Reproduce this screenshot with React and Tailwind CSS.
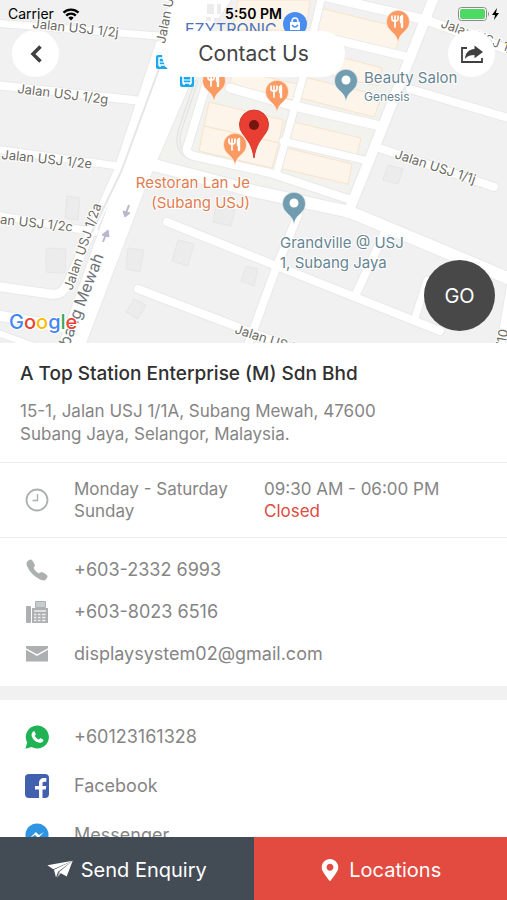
import { FaMapMarkerAlt } from "react-icons/fa";
import { IoCall } from "react-icons/io5";

const roads = [
  // left side streets
  { d: "M-5 23 L158 36", w: 7 },
  { d: "M-5 85 L142 101", w: 8 },
  { d: "M-5 149 L118 166", w: 7 },
  { d: "M-5 215 L95 232", w: 7 },
  { d: "M-5 286 L50 294 Q62 296 67 285 L118 172 L160 45", w: 9 },
  { d: "M-5 315 L80 330", w: 10 },
  { d: "M-5 332 L45 350", w: 6 },
  // commercial blocks
  { d: "M310 -7 L426 20 L515 52", w: 9 },
  { d: "M336 40 L404 56", w: 8 },
  { d: "M230 88 L290 105 L380 126", w: 9 },
  { d: "M410 89 L515 120", w: 8 },
  { d: "M283 141 L368 161", w: 7 },
  { d: "M376 147 L494 187", w: 8 },
  { d: "M207 82 L187 148 Q186 154 194 156 L270 173 L348 199", w: 8 },
  { d: "M322 -5 L303 77 L276 175", w: 7 },
  { d: "M436 -8 L383 126 L348 213", w: 10 },
  { d: "M150 164 L253 191 L350 212 L515 281", w: 12 },
  // south of the main street
  { d: "M167 222 L254 257 L440 331", w: 8 },
  { d: "M138 289 L240 328 L310 355", w: 8 },
  { d: "M298 215 L276 268 L248 345", w: 8 },
  { d: "M385 232 L356 294", w: 8 },
  { d: "M427 280 L415 318", w: 7 },
  { d: "M512 280 L500 350", w: 8 },
];

const shops = [
  "320,8 402,28 396,50 312,30",
  "238,0 310,0 306,30 232,30",
  "325,53 382,68 378,86 308,70",
  "304,77 382,96 374,117 300,98",
  "234,70 302,85 297,101 229,85",
  "286,120 361,138 357,155 282,138",
  "283,147 352,164 348,184 279,168",
  "209,102 283,120 279,143 204,126",
  "204,126 279,143 272,168 199,151",
];

const houses = [
  "67,196 80,198 78,220 65,218",
  "46,248 66,249 65,273 46,272",
  "128,248 144,250 140,272 126,269",
  "178,240 194,244 188,266 172,261",
  "134,299 146,305 138,319 126,312",
  "216,206 235,210 231,226 213,222",
  "246,266 258,269 254,286 241,281",
  "388,165 403,169 398,184 383,180",
];

const googleLetters = [
  ["G", "#4285f4"],
  ["o", "#ea4335"],
  ["o", "#fbbc05"],
  ["g", "#4285f4"],
  ["l", "#34a853"],
  ["e", "#ea4335"],
];

const numbers = [
  { icon: <IoCall className="size-6" />, label: "+603-2332 6993", href: "tel:+60323326993" },
  { icon: <FaxIcon />, label: "+603-8023 6516", href: "tel:+60380236516" },
  { icon: <MailIcon />, label: "displaysystem02@gmail.com", href: "mailto:displaysystem02@gmail.com" },
];

const socials = [
  { icon: <WhatsAppIcon />, label: "+60123161328" },
  { icon: <FacebookIcon />, label: "Facebook" },
  { icon: <MessengerIcon />, label: "Messenger" },
];

function FaxIcon() {
  return (
    <svg viewBox="0 0 24 24" className="size-6" fill="currentColor">
      <rect x="1" y="6" width="5" height="17" rx="1" />
      <path d="M10.500 1.500h10v6h-10z" fillOpacity=".65" stroke="currentColor" />
      <path d="M7 8h16v15H7z" />
      <path
        d="M9 11h12M9 14.500h2.500M13 14.500h2.500M17 14.500h3.500M9 17.500h2.500M13 17.500h2.500M17 17.500h3.500M9 20.500h2.500M13 20.500h2.500M17 20.500h3.500"
        stroke="#fff"
        strokeOpacity=".8"
        strokeWidth="1.300"
      />
    </svg>
  );
}

function MailIcon() {
  return (
    <svg viewBox="0 0 24 24" className="size-6" fill="currentColor">
      <path d="M1 4h22v2.200L12 12.300 1 6.200z" />
      <path d="M1 7.800l11 6.100 11-6.100v11.700H1z" />
    </svg>
  );
}

function ClockIcon() {
  return (
    <svg viewBox="0 0 24 24" className="size-6" fill="none" stroke="currentColor" strokeWidth="1.800">
      <circle cx="12" cy="12" r="10.500" />
      <path d="M12.500 6v6.500H7.500" strokeWidth="1.400" />
    </svg>
  );
}

function WhatsAppIcon() {
  return (
    <svg viewBox="0 0 24 24" className="size-6">
      <path d="M12.300.5a11.500 11.500 0 1 1-5.600 21.500L.4 23.700l1.800-6.100A11.500 11.500 0 0 1 12.300.5z" fill="#1fb355" />
      <path
        d="M8.300 6.500c.7-.4 1.200-.3 1.500.3l.9 2.100c.2.500-.1.900-1 1.900 1 1.900 2.300 3 4.200 3.800.9-1.200 1.300-1.600 1.900-1.300l2.200 1.100c.6.300.5.800.3 1.400-.5 1.400-2.300 2.200-4 1.900-4.200-.7-7.200-4.100-7.700-7.200-.2-1.600.5-3.200 1.700-4z"
        fill="#fff"
      />
    </svg>
  );
}

function FacebookIcon() {
  return (
    <svg viewBox="0 0 24 24" className="size-6">
      <rect width="24" height="24" rx="4" fill="#4160ae" />
      <path d="M14 24v-8.500h-4V12h4V9.200C14 6 16 4 19 4h2.300v3.700h-2c-1.300 0-1.800.7-1.800 1.900V12h3.800l-.6 3.500h-3.200V24z" fill="#fff" />
    </svg>
  );
}

function MessengerIcon() {
  return (
    <svg viewBox="0 0 24 24" className="size-6">
      <circle cx="12" cy="12" r="11.500" fill="#2f95e3" />
      <path d="M5 15l5.800-6 3.200 2.900L19 9l-5.800 6-3.100-2.900z" fill="#fff" />
    </svg>
  );
}

function ShareIcon() {
  return (
    <svg viewBox="0 0 24 20" className="w-6" fill="#3f3f3f">
      <path d="M7 4H2v14h20v-4" fill="none" stroke="#3f3f3f" strokeWidth="1.800" />
      <path d="M14.500 1.500L23 8l-8.500 6.300V11c-4 0-7 .8-9.500 3.700.3-5.600 3.500-9.300 9.500-9.800z" />
    </svg>
  );
}

function SendIcon() {
  return (
    <svg viewBox="0 0 26 20" className="w-[26px]" fill="#fff">
      <path d="M25.700.8L.3 5.300 6.300 9.200z" />
      <path d="M25.700.8L7 9.800l2 7.700 2-5.700z" />
      <path d="M25.700.8L11.800 12 10 17.700l3.300-3.500z" fillOpacity=".6" />
      <path d="M25.700.8L12.300 12.300l7.400 4.200z" />
    </svg>
  );
}

function Pin({ x, y, color, food }) {
  return (
    <g transform={`translate(${x} ${y})`}>
      <path
        d="M0 17C-1 10-3.500 8.500-7.500 4.500A11.500 11.500 0 1 1 7.500 4.500C3.500 8.500 1 10 0 17z"
        transform="translate(0 2)"
        fill={color}
        stroke="#fff"
        strokeOpacity=".5"
      />
      {food ? (
        <g fill="none" stroke="#fff" strokeLinecap="round">
          <path d="M-6-8v3q0 2 3 2t3-2v-3M-3-8V3" strokeWidth="1.700" />
          <path d="M4-8V3M3-7v5" strokeWidth="2.400" />
        </g>
      ) : (
        <circle cy="-3" r="4.500" fill="#fff" />
      )}
    </g>
  );
}

function BusStop({ x, y }) {
  return (
    <g transform={`translate(${x} ${y})`}>
      <rect width="14" height="14" rx="2" fill="#1ba7ee" />
      <path d="M3 3h8v7H3zM4 10v2M10 10v2" fill="none" stroke="#fff" strokeWidth="1.500" />
      <path d="M3 7h8" stroke="#fff" />
    </g>
  );
}

function MapView() {
  return (
    <svg
      viewBox="0 0 507 343"
      preserveAspectRatio="xMidYMid slice"
      className="block h-full w-full bg-[#f1f1f1]"
      fontFamily="Inter, sans-serif"
    >
      <path d="M187 92L207 80 300 100 430 25 383 126 350 205 150 158z" fill="#f2f2ee" />
      <g fill="#ececec" stroke="#e6e6e6">
        {houses.map((points) => (
          <polygon key={points} points={points} />
        ))}
      </g>
      <g fill="#fdf4ea" stroke="#f9e4cc">
        {shops.map((points) => (
          <polygon key={points} points={points} />
        ))}
      </g>
      <g fill="none" strokeLinecap="round" strokeLinejoin="round">
        <path d="M196 82L180 130Q174 150 190 158" stroke="#e1e2e0" strokeWidth="4" />
        <path d="M196 82L180 130Q174 150 190 158" stroke="#f1f1ee" strokeWidth="2" />
        {roads.map((road) => (
          <path key={road.d} d={road.d} stroke="#e9e9e9" strokeWidth={road.w + 2} />
        ))}
        <path d="M170-5L160 42 122 165 56 350H84L145 190 188 90 204 40 235-5z" fill="#fff" stroke="#e9e9e9" />
        {roads.map((road) => (
          <path key={road.d} d={road.d} stroke="#fff" strokeWidth={road.w} />
        ))}
        <path d="M163 58L121 172 92 232" stroke="#e6e6e6" strokeWidth="2" />
      </g>
      <g fill="#ececec">
        <path d="M207 4h7v10h-7zM217 4h4v10h-4zM206 17h5v4h-5zM214 18h7v4h-7z" />
      </g>

      <g fill="#b9b6cd" stroke="#b9b6cd" strokeWidth="2">
        <path d="M129 205L126 213" />
        <path d="M123 211L125 217 130 213z" strokeWidth="1" />
        <path d="M103 242L106 234" />
        <path d="M102 235L108 230 109 237z" strokeWidth="1" />
      </g>

      <g fill="#6d6b64" stroke="#fff" strokeWidth="2" paintOrder="stroke" fontSize="13">
        <text transform="translate(32 28) rotate(6)">Jalan USJ 1/2j</text>
        <text transform="translate(17 93) rotate(7)">Jalan USJ 1/2g</text>
        <text transform="translate(1 159) rotate(6)">Jalan USJ 1/2e</text>
        <text transform="translate(-18 222) rotate(6)">Jalan USJ 1/2c</text>
        <text transform="translate(72 291) rotate(-71)">Jalan USJ 1/2a</text>
        <text transform="translate(165 44) rotate(-79)">Jalan USJ 1/2</text>
        <text transform="translate(440 27) rotate(20)">Jalan USJ 1/1h</text>
        <text transform="translate(394 158) rotate(18)">Jalan USJ 1/1j</text>
        <text transform="translate(234 333) rotate(18)">Jalan USJ 1/1k</text>
        <text transform="translate(504 353) rotate(-80)">1/10</text>
        <text transform="translate(104 256) rotate(-69)" fontSize="16" fill="#70757a" textAnchor="end">
          Subang Mewah
        </text>
      </g>

      <BusStop x={156} y={55} />
      <BusStop x={180} y={73} />
      <text x="185" y="35" fill="#4d74bb" fontSize="16">
        EZYTRONIC
      </text>
      <g transform="translate(295 24)">
        <circle r="12" fill="#4a8df0" />
        <path d="M-5-2H5V6H-5z" fill="#fff" />
        <path d="M-3-2Q-3-6 0-6T3-2" fill="none" stroke="#fff" strokeWidth="1.500" />
        <path d="M-3 1Q0 5 3 1" fill="none" stroke="#4a8df0" strokeWidth="1.500" />
      </g>

      <Pin x={398} y={24} color="#fb9a62" food />
      <Pin x={214} y={83} color="#fb9a62" food />
      <Pin x={277} y={94} color="#fb9a62" food />
      <Pin x={235} y={147} color="#fb9a62" food />
      <Pin x={346} y={83} color="#729caf" />
      <Pin x={294} y={206} color="#729caf" />
      <path d="M254 158C252 145 248 141 243 134A14.500 14.500 0 1 1 265 134C260 141 256 145 254 158z" fill="#e93f33" stroke="#d63a2e" />
      <circle cx="254" cy="125" r="5" fill="#741710" />

      <g stroke="#fff" strokeWidth="2" paintOrder="stroke" fontSize="15">
        <g fill="#df7c50" textAnchor="end">
          <text x="250" y="188">Restoran Lan Je</text>
          <text x="250" y="208">(Subang USJ)</text>
        </g>
        <g fill="#668492">
          <text x="364" y="83">Beauty Salon</text>
          <text x="364" y="101" fontSize="12">
            Genesis
          </text>
          <text x="280" y="248">Grandville @ USJ</text>
          <text x="280" y="268">1, Subang Jaya</text>
        </g>
        <text x="9" y="329" fontSize="20" fontWeight="500">
          {googleLetters.map(([letter, color], i) => (
            <tspan key={i} fill={color}>
              {letter}
            </tspan>
          ))}
        </text>
      </g>
    </svg>
  );
}

function StatusBar() {
  return (
    <div className="grid grid-cols-3 items-center px-2 pt-1 text-sm leading-5 text-black">
      <div className="flex items-center gap-2">
        <span>Carrier</span>
        <svg viewBox="0 0 18 13" className="w-[18px]" fill="none" stroke="#000" strokeWidth="2.400">
          <path d="M1.500 4.700a10.600 10.600 0 0 1 15 0M4.200 7.600a6.800 6.800 0 0 1 9.600 0" />
          <path d="M9 12.500L6.300 9.800a3.800 3.800 0 0 1 5.400 0z" fill="#000" stroke="none" />
        </svg>
      </div>
      <span className="text-center font-semibold">5:50 PM</span>
      <svg viewBox="0 0 44 14" className="w-11 justify-self-end">
        <rect x="3.500" y=".5" width="28" height="13" rx="3" fill="#fff" stroke="#8b8b8b" />
        <rect x="5" y="2" width="25" height="10" rx="2" fill="#4cd964" />
        <path d="M33 4.500q2 2.500 0 5z" fill="#8b8b8b" />
        <path d="M42 1L37 8h3l-1 5 5-7h-3z" fill="#000" />
      </svg>
    </div>
  );
}

function ContactRow({ icon, label, href = "#", className }) {
  return (
    <a href={href} className={`flex items-center ${className}`}>
      <span className="flex w-[74px] shrink-0 justify-center text-[#acb0b0]">{icon}</span>
      <span>{label}</span>
    </a>
  );
}

export default function App() {
  return (
    <div className="flex h-screen flex-col overflow-hidden bg-white font-[Inter,sans-serif] text-lg text-[#858585]">
      <main className="min-h-0 flex-1 overflow-hidden">
        <section className="relative h-[343px]">
          <MapView />
          <header className="absolute inset-x-0 top-0">
            <StatusBar />
            <div className="flex items-center justify-between px-3 pt-1.5">
              <button aria-label="Back" className="flex size-[47px] items-center justify-center rounded-full bg-white">
                <svg viewBox="0 0 12 18" className="w-3" fill="none" stroke="#3f3f3f" strokeWidth="3.500">
                  <path d="M10.500 1.500L3 9l7.500 7.500" />
                </svg>
              </button>
              <h1 className="rounded-full bg-white px-9 py-2 text-[21px] leading-[30px] text-[#444]">Contact Us</h1>
              <button aria-label="Share" className="flex size-[47px] items-center justify-center rounded-full bg-white">
                <ShareIcon />
              </button>
            </div>
          </header>
          <button className="absolute right-3 bottom-3 size-[71px] rounded-full bg-[#484848] text-xl text-white">
            GO
          </button>
        </section>

        <section className="border-b border-[#ececec] px-5 py-4">
          <h2 className="text-[19px] leading-[30px] font-medium text-[#303030]">A Top Station Enterprise (M) Sdn Bhd</h2>
          <p className="mt-[11px] max-w-[400px] text-[17px] leading-[23px]">
            15-1, Jalan USJ 1/1A, Subang Mewah, 47600 Subang Jaya, Selangor, Malaysia.
          </p>
        </section>

        <section className="flex items-center border-b border-[#ececec] py-[15px]">
          <span className="flex w-[74px] shrink-0 justify-center text-[#acb0b0]">
            <ClockIcon />
          </span>
          <dl className="grid grid-cols-[190px_1fr] text-[17px] leading-[22px]">
            <dt>Monday - Saturday</dt>
            <dd>09:30 AM - 06:00 PM</dd>
            <dt>Sunday</dt>
            <dd className="text-[#dd4b42]">Closed</dd>
          </dl>
        </section>

        <section className="border-b-14 border-[#f1f1f1] py-[11px]">
          {numbers.map((row) => (
            <ContactRow key={row.label} {...row} className="h-[42px]" />
          ))}
        </section>

        <section className="pt-3">
          {socials.map((row) => (
            <ContactRow key={row.label} {...row} className="h-[49px]" />
          ))}
        </section>
      </main>

      <footer className="grid h-[63px] shrink-0 grid-cols-2 text-xl text-white">
        <button className="flex items-center justify-center gap-2 bg-[#434b55] pt-0.5">
          <SendIcon />
          Send Enquiry
        </button>
        <button className="flex items-center justify-center gap-2 bg-[#e34b40] pt-0.5">
          <FaMapMarkerAlt className="size-[22px]" />
          Locations
        </button>
      </footer>
    </div>
  );
}
